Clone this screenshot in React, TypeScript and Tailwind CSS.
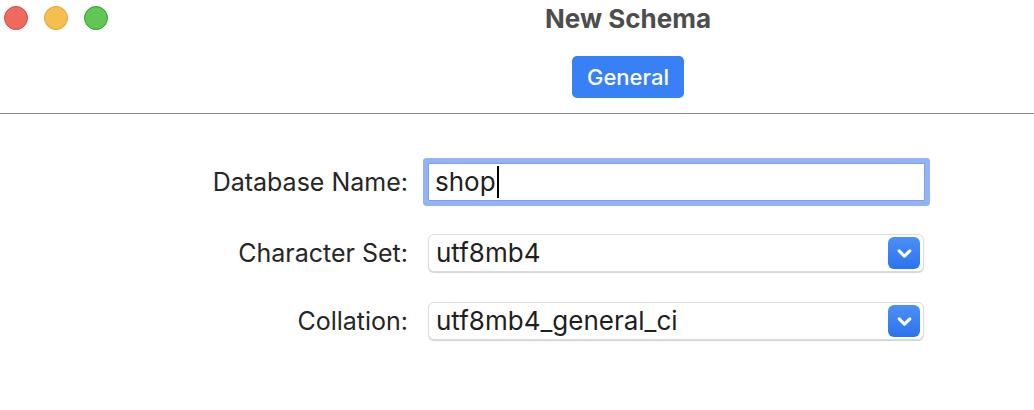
import { HiChevronDown } from 'react-icons/hi2';

const TrafficLights = () => (
  <div className="flex w-[222px] items-center gap-4 pl-1">
    <span className="h-6 w-6 rounded-full border border-[#e0443e] bg-[#ee6a5f]" />
    <span className="h-6 w-6 rounded-full border border-[#dea236] bg-[#f5be4f]" />
    <span className="h-6 w-6 rounded-full border border-[#1aab29] bg-[#62c554]" />
  </div>
);

const SelectField = ({ value }: { value: string }) => (
  <div className="flex h-[38px] w-[496px] items-center justify-between rounded-[6px] border border-[#dcdcdc] bg-white pl-[7px] pr-[3px] shadow-[0_1px_1px_rgba(0,0,0,0.18)]">
    <span className="text-[26px] leading-none text-[#1f1f1f]">{value}</span>
    <span className="flex h-8 w-8 items-center justify-center rounded-[6px] bg-gradient-to-b from-[#4b90f8] to-[#2c72ee] text-white">
      <HiChevronDown className="text-[17px]" strokeWidth={3} />
    </span>
  </div>
);

const Row = ({ label, children, className }: { label: string; children: React.ReactNode; className?: string }) => (
  <div className={`flex items-center ${className ?? ''}`}>
    <label className="w-[408px] text-right text-[25px] leading-none text-[#262626]">{label}</label>
    <div className="ml-5">{children}</div>
  </div>
);

export default function App() {
  return (
    <div className="h-[410px] w-[1034px] overflow-hidden bg-white font-['Inter',sans-serif]">
      <div className="border-b border-[#8c8c8c] pb-[15px]">
        <div className="flex h-9 items-center">
          <TrafficLights />
          <div className="flex-1 text-center text-[26px] font-bold text-[#4d4d4d]">New Schema</div>
        </div>
        <div className="mt-5 flex justify-center pl-[222px]">
          <button className="h-[42px] w-[112px] rounded-[5px] bg-[#3880f5] text-[22px] font-medium text-white">General</button>
        </div>
      </div>

      <div className="pt-[49px]">
        <Row label="Database Name:">
          <div className="flex h-[38px] w-[497px] items-center rounded-[1px] border border-[#7c9fe8] bg-white pl-[6px] shadow-[0_0_0_5px_#93b4f4]">
            <span className="text-[26px] leading-none text-[#1f1f1f]">shop</span>
            <span className="ml-px h-8 w-[2px] bg-black" />
          </div>
        </Row>
        <Row label="Character Set:" className="mt-[33px]">
          <SelectField value="utf8mb4" />
        </Row>
        <Row label="Collation:" className="mt-[30px]">
          <SelectField value="utf8mb4_general_ci" />
        </Row>
      </div>
    </div>
  );
}
